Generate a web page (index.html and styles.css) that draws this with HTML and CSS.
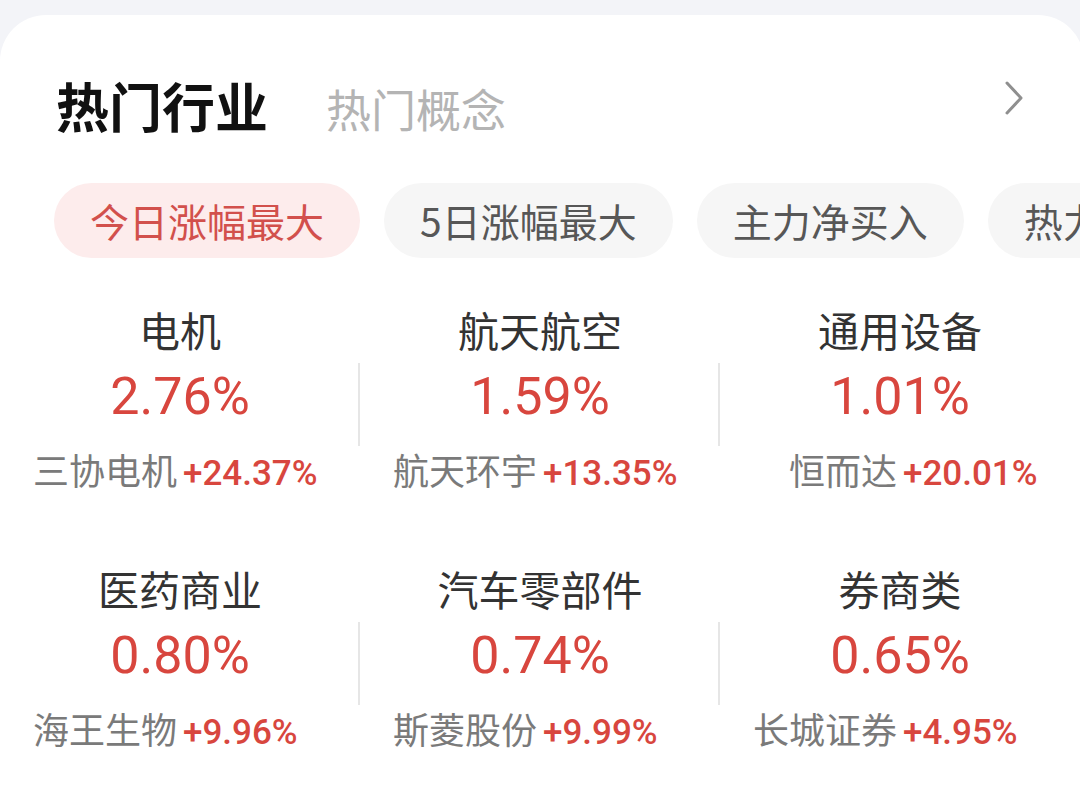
FILE: index.html
```html
<!DOCTYPE html>
<html lang="zh-CN">

<head>
    <meta charset="UTF-8">
    <meta name="viewport" content="width=device-width, initial-scale=1.0">
    <title>热门行业</title>
    <link rel="stylesheet" href="styles.css">
</head>

<body>

    <div class="card">
        <!-- Заголовок с вкладками -->
        <div class="header">
            <span class="tab tab-active">热门行业</span>
            <span class="tab">热门概念</span>
            <svg class="more" width="20" height="34" viewBox="0 0 20 34">
                <path d="M3 2 L17 17 L3 32" fill="none" stroke="#8f8f8f" stroke-width="3" stroke-linecap="round" stroke-linejoin="round"/>
            </svg>
        </div>

        <!-- Фильтры -->
        <div class="chips">
            <span class="chip chip-active">今日涨幅最大</span>
            <span class="chip">5日涨幅最大</span>
            <span class="chip">主力净买入</span>
            <span class="chip">热力值最高</span>
        </div>

        <!-- Сетка отраслей -->
        <div class="grid">
            <div class="cell">
                <div class="name">电机</div>
                <div class="rate"><span>2.76%</span></div>
                <div class="lead"><span>三协电机</span><b>+24.37%</b></div>
            </div>
            <div class="cell">
                <div class="name">航天航空</div>
                <div class="rate"><span>1.59%</span></div>
                <div class="lead"><span>航天环宇</span><b>+13.35%</b></div>
            </div>
            <div class="cell">
                <div class="name">通用设备</div>
                <div class="rate"><span>1.01%</span></div>
                <div class="lead"><span>恒而达</span><b>+20.01%</b></div>
            </div>
            <div class="cell">
                <div class="name">医药商业</div>
                <div class="rate"><span>0.80%</span></div>
                <div class="lead"><span>海王生物</span><b>+9.96%</b></div>
            </div>
            <div class="cell">
                <div class="name">汽车零部件</div>
                <div class="rate"><span>0.74%</span></div>
                <div class="lead"><span>斯菱股份</span><b>+9.99%</b></div>
            </div>
            <div class="cell">
                <div class="name">券商类</div>
                <div class="rate"><span>0.65%</span></div>
                <div class="lead"><span>长城证券</span><b>+4.95%</b></div>
            </div>
        </div>
    </div>

</body>

</html>
```

FILE: styles.css
```css
/* Общие стили */
body {
    margin: 0;
    background-color: #f3f4f8;
    font-family: "Noto Sans CJK SC", "Noto Sans", sans-serif;
    overflow: hidden;
}

.card {
    margin-top: 15px;
    margin-right: -4px;
    height: 800px;
    background-color: #fff;
    border-radius: 46px 46px 0 0;
}

.header {
    display: flex;
    align-items: baseline;
    padding: 60px 0 0 56px;
    height: 61px;
}

.tab {
    font-size: 45px;
    line-height: 60px;
    color: #b4b4b4;
    margin-right: 58px;
}

.tab-active {
    font-size: 53px;
    font-weight: bold;
    color: #111;
}

.more {
    margin-left: auto;
    margin-right: 60px;
    align-self: flex-start;
    margin-top: 6px;
}

.chips {
    display: flex;
    gap: 24px;
    margin-top: 47px;
    padding-left: 54px;
    white-space: nowrap;
    overflow: hidden;
}

.chip {
    flex-shrink: 0;
    height: 75px;
    line-height: 75px;
    padding: 0 36px;
    border-radius: 38px;
    background-color: #f6f6f6;
    color: #575757;
    font-size: 39px;
}

.chip-active {
    background-color: #fdecec;
    color: #d2504c;
}

.grid {
    display: grid;
    grid-template-columns: repeat(3, 360px);
    row-gap: 72px;
    margin-top: 46px;
    text-align: center;
}

.name {
    height: 50px;
    font-size: 41px;
    line-height: 50px;
    color: #333;
}

.rate {
    height: 82px;
    margin-top: 9px;
    padding-top: 1px;
}

.cell:not(:nth-child(3n+1)) .rate {
    border-left: 2px solid #e6e6e6;
    margin-left: -2px;
}

.rate span {
    font-family: Roboto, "Noto Sans", sans-serif;
    font-size: 52px;
    line-height: 66px;
    color: #d8463e;
}

/* лидер отрасли: имя справа от центра, процент слева */
.lead {
    display: grid;
    grid-template-columns: 1fr 1fr;
    align-items: baseline;
    column-gap: 6px;
    height: 44px;
    margin-top: 1px;
    font-size: 36px;
    line-height: 44px;
    color: #7a7a7a;
    white-space: nowrap;
}

.lead span {
    text-align: right;
}

.lead b {
    text-align: left;
    font-family: Roboto, "Noto Sans", sans-serif;
    font-weight: 500;
    font-size: 35px;
    color: #d8463e;
}
```
